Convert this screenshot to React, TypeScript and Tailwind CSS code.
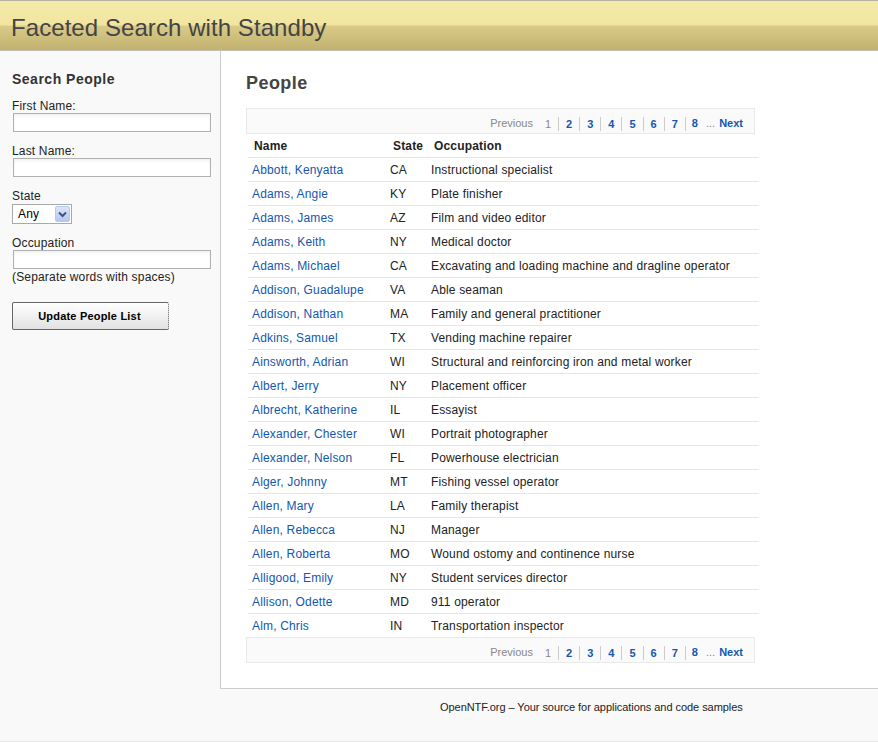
const rows: [string, string, string][] = [
  ["Abbott, Kenyatta", "CA", "Instructional specialist"],
  ["Adams, Angie", "KY", "Plate finisher"],
  ["Adams, James", "AZ", "Film and video editor"],
  ["Adams, Keith", "NY", "Medical doctor"],
  ["Adams, Michael", "CA", "Excavating and loading machine and dragline operator"],
  ["Addison, Guadalupe", "VA", "Able seaman"],
  ["Addison, Nathan", "MA", "Family and general practitioner"],
  ["Adkins, Samuel", "TX", "Vending machine repairer"],
  ["Ainsworth, Adrian", "WI", "Structural and reinforcing iron and metal worker"],
  ["Albert, Jerry", "NY", "Placement officer"],
  ["Albrecht, Katherine", "IL", "Essayist"],
  ["Alexander, Chester", "WI", "Portrait photographer"],
  ["Alexander, Nelson", "FL", "Powerhouse electrician"],
  ["Alger, Johnny", "MT", "Fishing vessel operator"],
  ["Allen, Mary", "LA", "Family therapist"],
  ["Allen, Rebecca", "NJ", "Manager"],
  ["Allen, Roberta", "MO", "Wound ostomy and continence nurse"],
  ["Alligood, Emily", "NY", "Student services director"],
  ["Allison, Odette", "MD", "911 operator"],
  ["Alm, Chris", "IN", "Transportation inspector"],
];

function Pager() {
  return (
    <div className="h-[26px] w-[509px] border border-[#e9e9e9] bg-[#fafafa] flex items-center justify-end pr-[11px] pt-[5px] text-[11px] tracking-normal">
      <span className="text-[#888888] mr-[12px]">Previous</span>
      <span className="text-[#888888] pr-[7px] border-r border-[#cccccc] leading-[14px]">1</span>
      {["2", "3", "4", "5", "6", "7"].map((n) => (
        <a key={n} className="font-bold text-[#1257b0] px-[7px] border-r border-[#cccccc] leading-[14px]">{n}</a>
      ))}
      <a className="font-bold text-[#1257b0] pl-[6px]">8</a>
      <span className="text-[#888888] ml-[8px] mr-[4px]">...</span>
      <a className="font-bold text-[#1257b0]">Next</a>
    </div>
  );
}

function TextBox() {
  return <input className="block ml-px w-[198px] h-[19px] border border-[#b0b0b0] bg-white shadow-[inset_0_2px_3px_rgba(0,0,0,0.06)]" />;
}

export default function App() {
  return (
    <div className="w-[878px] h-[743px] bg-white font-['Liberation_Sans',Arial,sans-serif] text-[12px] tracking-[0.17px] text-[#222222] flex flex-col">
      <header className="h-[51px] border-t border-b border-t-[#b5b2a4] border-b-[#c4c0b0] bg-[linear-gradient(#f5eaaa_0%,#f1e5a0_48%,#d9ca88_52%,#c2b170_100%)] pl-[11px]">
        <h1 className="text-[24px] leading-[54px] tracking-[0.07px] font-normal text-[#444444]">Faceted Search with Standby</h1>
      </header>
      <div className="flex h-[638px] bg-[#f9f9f9]">
        <aside className="w-[220px] shrink-0 pl-[12px] pt-[20px]">
          <h2 className="text-[14px] leading-[17px] font-bold tracking-[0.5px] text-[#333333]">Search People</h2>
          <label className="block mt-[11px] leading-[14px]">First Name:</label>
          <TextBox />
          <label className="block mt-[12px] leading-[14px]">Last Name:</label>
          <TextBox />
          <label className="block mt-[12px] leading-[14px]">State</label>
          <div className="mt-px w-[60px] h-[20px] border border-[#a9a9a9] bg-white flex items-center justify-between pl-[5px] pr-px text-black">
            <span>Any</span>
            <span className="w-[15px] h-[16px] rounded-[2px] border border-[#b8c8ee] bg-[linear-gradient(#dbe5fb,#b5c7f3)] flex items-center justify-center">
              <svg width="9" height="7" viewBox="0 0 9 7"><path d="M1 1.5 L4.5 5 L8 1.5" fill="none" stroke="#3f5580" strokeWidth="2" /></svg>
            </span>
          </div>
          <label className="block mt-[12px] leading-[14px]">Occupation</label>
          <TextBox />
          <p className="mt-[1px] leading-[14px]">(Separate words with spaces)</p>
          <button className="block mt-[18px] w-[157px] h-[28px] pr-[2px] border border-[#666666] [border-right-style:dotted] rounded-[2px] bg-[linear-gradient(#ffffff,#e2e2e2)] font-bold text-[11px] tracking-[0.2px] text-black">Update People List</button>
        </aside>
        <main className="flex-1 border-l border-b border-[#cccccc] bg-white pl-[25px] pt-[22px]">
          <h2 className="text-[18px] leading-[21px] font-bold tracking-[0.45px] text-[#444444]">People</h2>
          <div className="mt-[14px]"><Pager /></div>
          <table className="ml-[2px] w-[511px] table-fixed border-collapse">
            <colgroup><col className="w-[138px]" /><col className="w-[41px]" /><col /></colgroup>
            <thead>
              <tr className="h-[23px] border-b border-[#e6e6e6] font-bold text-left">
                <th className="pl-[6px] pt-[1px] p-0">Name</th>
                <th className="pl-[7px] pt-[1px] p-0">State</th>
                <th className="pl-[7px] pt-[1px] p-0">Occupation</th>
              </tr>
            </thead>
            <tbody>
              {rows.map(([n, s, o]) => (
                <tr key={n} className="h-[24px] border-b border-[#e6e6e6] last:border-b-0">
                  <td className="pl-[4px] pt-[2px] p-0 text-[#1257b0]"><a>{n}</a></td>
                  <td className="pl-[4px] pt-[2px] p-0">{s}</td>
                  <td className="pl-[4px] pt-[2px] p-0">{o}</td>
                </tr>
              ))}
            </tbody>
          </table>
          <Pager />
        </main>
      </div>
      <footer className="h-[53px] border-b border-[#e6e6e6] bg-[#f9f9f9] pt-[11px] pl-[440px] text-[11px] leading-[14px] tracking-[-0.05px]">OpenNTF.org – Your source for applications and code samples</footer>
    </div>
  );
}
